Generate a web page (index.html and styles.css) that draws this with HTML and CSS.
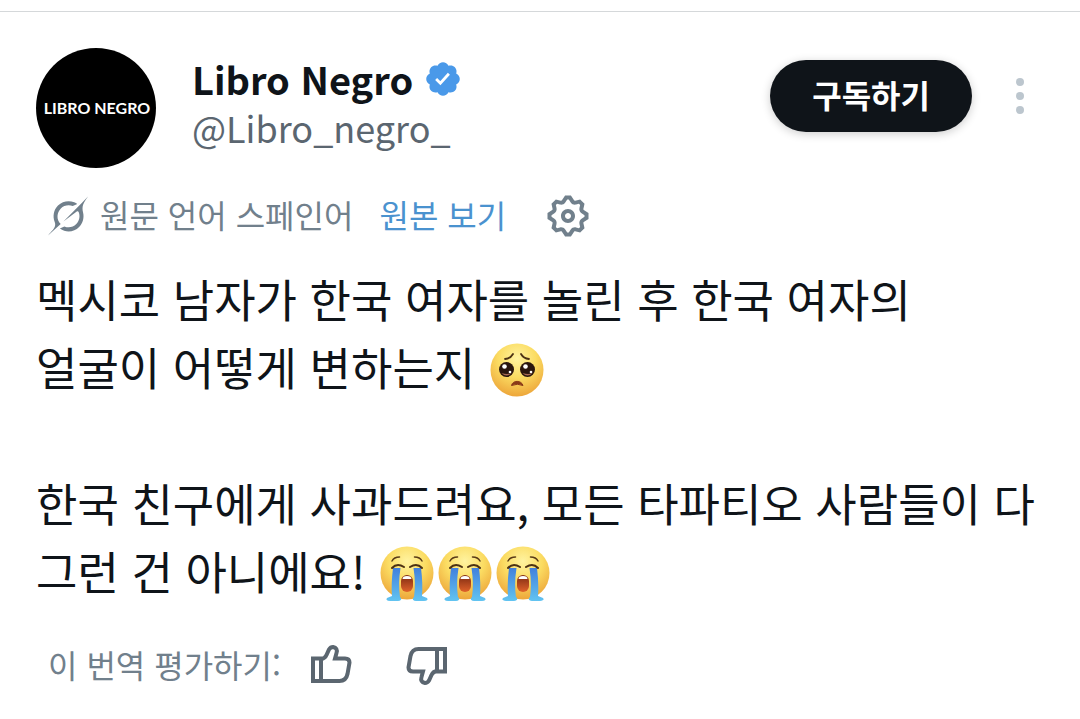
FILE: index.html
```html
<!DOCTYPE html>
<html lang="ko">
<head>
  <meta charset="UTF-8" />
  <meta name="viewport" content="width=device-width, initial-scale=1.0" />
  <title>Libro Negro</title>
  <link rel="stylesheet" href="styles.css">
</head>
<body>
  <svg class="defs" aria-hidden="true">
    <defs>
      <radialGradient id="face" cx="50%" cy="28%" r="72%">
        <stop offset="0" stop-color="#fff3a0" />
        <stop offset="0.5" stop-color="#fbdc62" />
        <stop offset="1" stop-color="#eda63a" />
      </radialGradient>
      <linearGradient id="tear" x1="0" y1="0" x2="0" y2="1">
        <stop offset="0" stop-color="#4280dc" />
        <stop offset="1" stop-color="#62c4f1" />
      </linearGradient>
      <linearGradient id="mouth" x1="0" y1="0" x2="0" y2="1">
        <stop offset="0" stop-color="#7c2a12" />
        <stop offset="1" stop-color="#e0622a" />
      </linearGradient>
      <symbol id="pleading" viewBox="0 0 54 56">
        <circle cx="27" cy="28" r="26.5" fill="url(#face)" />
        <path d="M15 17q5.500-.5 8-5M39 17q-5.500-.5-8-5" fill="none" stroke="#4c3113" stroke-width="1.800" stroke-linecap="round" />
        <circle cx="16.500" cy="27.500" r="7.500" fill="#2a160e" />
        <circle cx="37.500" cy="27.500" r="7.500" fill="#2a160e" />
        <path d="M11.500 31q5 5 10 0q-4 2-10 0M32.500 31q5 5 10 0q-4 2-10 0" fill="#a86b54" />
        <circle cx="14.500" cy="24.500" r="2.300" fill="#fff" />
        <circle cx="35.500" cy="24.500" r="2.300" fill="#fff" />
        <circle cx="20" cy="30" r="1.300" fill="#fff" />
        <circle cx="41" cy="30" r="1.300" fill="#fff" />
        <path d="M21.500 43.500c1-5.500 10-5.500 11.500 0q-5.500-2.500-11.500 0" fill="#8a3a18" stroke="#8a3a18" stroke-linejoin="round" />
      </symbol>
      <symbol id="crying" viewBox="0 0 54 56">
        <circle cx="27" cy="27" r="26.500" fill="url(#face)" />
        <path d="M12 15q2-4 7.500-4M42 15q-2-4-7.500-4" fill="none" stroke="#5a3b17" stroke-width="1.500" stroke-linecap="round" />
        <path d="M13 22Q11 38 12 50l-5 2q-2 2.500 3 3h8q4-.5 3-3l-1-1Q18 38 20.500 22zM41 22q2 16 1 28l5 2q2 2.500-3 3h-8q-4-.5-3-3l1-1q2-13-.5-29z" fill="url(#tear)" />
        <path d="M12 22q5-5.500 12-1M42 22q-5-5.500-12-1" fill="none" stroke="#4c3113" stroke-width="2" stroke-linecap="round" />
        <rect x="21" y="29" width="12" height="17" rx="6" fill="url(#mouth)" />
        <path d="M22.500 33q0-3 4.500-3t4.500 3z" fill="#fff" />
      </symbol>
      <symbol id="thumb" viewBox="0 0 44 44">
        <path d="M4 15.500H12V38H4zM12 16q4-.5 5.500-4L20 6.500Q21.500 4 24 4q5 1 3.500 6L26 15.500H36q4.500 0 4.500 4L38.500 31q-1.500 7-8 7H12" fill="none" stroke="currentColor" stroke-width="4" stroke-linejoin="miter" />
      </symbol>
    </defs>
  </svg>

  <article class="post">
    <header class="post-header">
      <a class="avatar" href="#">LIBRO NEGRO</a>
      <div class="author">
        <a class="author-name" href="#">Libro Negro
          <svg class="badge" viewBox="1 1 22 22" aria-hidden="true">
            <path fill="#4a99e9" d="M22.250 12c0-1.430-.88-2.670-2.190-3.340.46-1.390.2-2.900-.81-3.910s-2.520-1.270-3.910-.81c-.66-1.310-1.910-2.190-3.340-2.190s-2.670.88-3.330 2.190c-1.400-.46-2.910-.2-3.920.81s-1.260 2.520-.8 3.910c-1.310.67-2.200 1.910-2.200 3.340s.89 2.670 2.200 3.340c-.46 1.390-.21 2.900.8 3.910s2.520 1.260 3.910.81c.67 1.310 1.910 2.190 3.340 2.190s2.680-.88 3.340-2.190c1.390.45 2.900.2 3.910-.81s1.270-2.520.81-3.910c1.310-.67 2.190-1.910 2.190-3.340z" />
            <path fill="none" stroke="#fff" stroke-width="1.700" d="M7.800 12l2.600 2.600 5.200-5.800" />
          </svg>
        </a>
        <a class="author-handle" href="#">@Libro_negro_</a>
      </div>
      <button class="subscribe" type="button">구독하기</button>
      <button class="icon-btn more" type="button" aria-label="더 보기">
        <svg width="24" height="40" viewBox="0 0 24 40" fill="#bcc6ce">
          <circle cx="12" cy="6" r="4" /><circle cx="12" cy="20" r="4" /><circle cx="12" cy="34" r="4" />
        </svg>
      </button>
    </header>

    <div class="translation">
      <svg class="grok" viewBox="0 0 33 32" aria-hidden="true">
        <path fill="currentColor" d="M12.745 20.540l10.970-8.190c.539-.4 1.307-.244 1.564.38 1.349 3.288.746 7.241-1.938 9.955-2.683 2.714-6.417 3.310-9.830 1.954l-3.728 1.745c5.347 3.697 11.840 2.782 15.898-1.324 3.219-3.255 4.216-7.692 3.284-11.693l.008.009c-1.351-5.878.332-8.227 3.782-13.031L33 0l-4.540 4.590v-.014L12.743 20.544m-2.263 1.987c-3.837-3.707-3.175-9.446.1-12.755 2.420-2.449 6.388-3.448 9.852-1.979l3.720-1.737c-.67-.49-1.530-1.017-2.515-1.387-4.455-1.854-9.789-.931-13.410 2.728-3.483 3.523-4.579 8.940-2.697 13.561 1.405 3.454-.899 5.898-3.220 8.364C1.490 30.200.666 31.074 0 32l10.478-9.466" />
      </svg>
      <span class="source">원문 언어 스페인어</span>
      <a class="original" href="#">원본 보기</a>
      <button class="icon-btn settings" type="button" aria-label="설정">
        <svg width="48" height="48" viewBox="0 0 24 24" fill="currentColor">
          <path d="M10.540 1.750h2.920l1.570 2.360c.11.17.32.25.53.21l2.530-.59 2.170 2.170-.58 2.540c-.05.2.04.41.21.53l2.360 1.570v2.920l-2.360 1.570c-.17.12-.26.33-.21.53l.58 2.540-2.170 2.170-2.530-.59c-.21-.04-.42.04-.53.21l-1.570 2.360h-2.920l-1.580-2.360c-.11-.17-.32-.25-.52-.21l-2.540.59-2.170-2.170.58-2.540c.05-.2-.03-.41-.21-.53l-2.350-1.570v-2.920L4.100 8.970c.18-.12.26-.33.21-.53L3.730 5.900 5.900 3.730l2.540.59c.2.04.41-.04.52-.21l1.580-2.360zm1.070 2l-.98 1.470C10.050 6.080 9 6.500 7.990 6.270l-1.460-.34-.6.6.33 1.460c.24 1.010-.18 2.070-1.050 2.640l-1.460.98v.78l1.460.98c.87.57 1.290 1.630 1.050 2.640l-.33 1.460.6.6 1.460-.34c1.010-.23 2.060.19 2.640 1.050l.98 1.470h.78l.97-1.470c.58-.86 1.630-1.280 2.650-1.050l1.450.34.61-.6-.34-1.460c-.23-1.010.18-2.070 1.050-2.640l1.470-.98v-.78l-1.470-.98c-.87-.57-1.280-1.630-1.050-2.640l.34-1.460-.61-.6-1.450.34c-1.020.23-2.070-.19-2.650-1.050l-.97-1.470h-.78zM12 10.500c-.83 0-1.500.67-1.500 1.500s.67 1.500 1.500 1.500 1.500-.67 1.500-1.500-.67-1.500-1.500-1.500zM8.500 12c0-1.930 1.560-3.500 3.500-3.500 1.930 0 3.500 1.570 3.500 3.500s-1.570 3.500-3.500 3.500c-1.940 0-3.500-1.570-3.500-3.500z" />
        </svg>
      </button>
    </div>

    <div class="post-text">
      <p>멕시코 남자가 한국 여자를 놀린 후 한국 여자의<br>얼굴이 어떻게 변하는지 <svg class="emoji" role="img" aria-label="🥺"><use href="#pleading" /></svg></p>
      <p>한국 친구에게 사과드려요, 모든 타파티오 사람들이 다<br>그런 건 아니에요! <svg class="emoji" role="img" aria-label="😭"><use href="#crying" /></svg><svg class="emoji" role="img" aria-label="😭"><use href="#crying" /></svg><svg class="emoji" role="img" aria-label="😭"><use href="#crying" /></svg></p>
    </div>

    <footer class="rating">
      <span>이 번역 평가하기:</span>
      <button class="icon-btn" type="button" aria-label="좋아요">
        <svg width="44" height="44"><use href="#thumb" /></svg>
      </button>
      <button class="icon-btn down" type="button" aria-label="싫어요">
        <svg width="44" height="44"><use href="#thumb" /></svg>
      </button>
    </footer>
  </article>
</body>
</html>
```
FILE: styles.css
```css
* {
  margin: 0;
  padding: 0;
  box-sizing: border-box;
}
body {
  font-family: 'Noto Sans CJK KR', sans-serif;
  background: #fff;
  color: #0f1419;
  padding-top: 11px;
}
a {
  color: inherit;
  text-decoration: none;
}
svg {
  display: block;
}
.defs {
  position: absolute;
  width: 0;
  height: 0;
}
.post {
  border-top: 1px solid #d5d8da;
  padding: 36px 36px 24px;
}
.post-header {
  display: flex;
  align-items: flex-start;
}
.avatar {
  display: flex;
  align-items: center;
  justify-content: center;
  width: 120px;
  height: 120px;
  padding: 0 0 2px 2px;
  border-radius: 50%;
  background: #000;
  color: #fff;
  font-family: Lato, sans-serif;
  font-size: 16px;
  font-weight: 700;
  white-space: nowrap;
}
.author {
  display: flex;
  flex-direction: column;
  flex: 1;
  margin-left: 36px;
  padding-top: 6px;
}
.author-name {
  display: flex;
  align-items: center;
  gap: 12px;
  font-size: 38px;
  font-weight: 700;
  line-height: 50px;
}
.badge {
  width: 36px;
  height: 36px;
}
.author-handle {
  color: #5b6670;
  font-size: 36px;
  line-height: 46px;
}
.subscribe {
  height: 72px;
  margin-top: 12px;
  padding: 0 42px 4px;
  border: none;
  border-radius: 36px;
  background: #0f1419;
  box-shadow: 0 2px 10px rgba(0, 0, 0, 0.2);
  color: #fff;
  font-family: inherit;
  font-size: 32px;
  font-weight: 700;
  cursor: pointer;
}
.icon-btn {
  border: none;
  background: none;
  color: inherit;
  cursor: pointer;
}
.more {
  margin: 28px 12px 0 36px;
}
.translation {
  display: flex;
  align-items: center;
  height: 48px;
  margin-top: 24px;
  padding-left: 12px;
  color: #71808c;
  font-size: 32px;
}
.grok {
  width: 40px;
  height: 40px;
  margin-right: 12px;
}
.source,
.original {
  padding-bottom: 4px;
}
.original {
  margin-left: 26px;
  color: #4a92cf;
}
.settings {
  margin-left: 38px;
}
.post-text {
  margin-top: 25px;
  font-size: 45px;
  line-height: 68px;
}
.post-text p + p {
  margin-top: 68px;
}
.emoji {
  display: inline-block;
  width: 54px;
  height: 56px;
  margin-left: 2px;
  margin-right: 2px;
  vertical-align: -12px;
}
.rating {
  display: flex;
  align-items: center;
  height: 48px;
  margin-top: 36px;
  padding-left: 12px;
  color: #71808c;
  font-size: 32px;
}
.rating span {
  padding-bottom: 2px;
}
.rating .icon-btn {
  margin-left: 28px;
  color: #5b6670;
}
.rating .down {
  margin-left: 52px;
  transform: rotate(180deg);
}
```
